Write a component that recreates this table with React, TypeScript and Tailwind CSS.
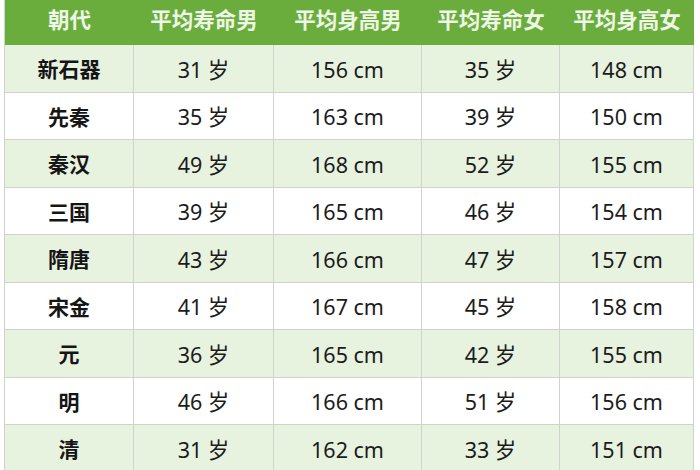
import React from 'react';

const rows: [string, string, string, string, string][] = [
  ['新石器', '31 岁', '156 cm', '35 岁', '148 cm'],
  ['先秦', '35 岁', '163 cm', '39 岁', '150 cm'],
  ['秦汉', '49 岁', '168 cm', '52 岁', '155 cm'],
  ['三国', '39 岁', '165 cm', '46 岁', '154 cm'],
  ['隋唐', '43 岁', '166 cm', '47 岁', '157 cm'],
  ['宋金', '41 岁', '167 cm', '45 岁', '158 cm'],
  ['元', '36 岁', '165 cm', '42 岁', '155 cm'],
  ['明', '46 岁', '166 cm', '51 岁', '156 cm'],
  ['清', '31 岁', '162 cm', '33 岁', '151 cm'],
];

const headers = ['朝代', '平均寿命男', '平均身高男', '平均寿命女', '平均身高女'];

export default function App() {
  return (
    <div
      className="w-[700px] h-[470px] overflow-hidden bg-white"
      style={{ fontFamily: '"Noto Sans", "Noto Sans CJK SC", sans-serif' }}
    >
      <div className="ml-[4px] w-[689px] grid grid-cols-[129px_140px_148px_138px_134px] border-l border-[#cfd3cc]">
        {headers.map((h) => (
          <div
            key={h}
            className="h-[45px] bg-[#6aad3d] flex items-center justify-center pb-[4px] text-[21.5px] font-bold text-[#eef6e6]"
          >
            {h}
          </div>
        ))}
        {rows.map((r, i) => (
          <React.Fragment key={r[0]}>
            {r.map((c, j) => (
              <div
                key={j}
                className={`h-[47.5px] pt-[3px] flex items-center justify-center border-r border-b border-[#cfd3cc] ${
                  i % 2 === 0 ? 'bg-[#e7f2df]' : 'bg-white'
                } ${j === 0 ? 'font-bold text-[21px] text-[#151515]' : 'text-[21.5px] text-[#1c1c1c]'}`}
              >
                {c}
              </div>
            ))}
          </React.Fragment>
        ))}
      </div>
    </div>
  );
}
